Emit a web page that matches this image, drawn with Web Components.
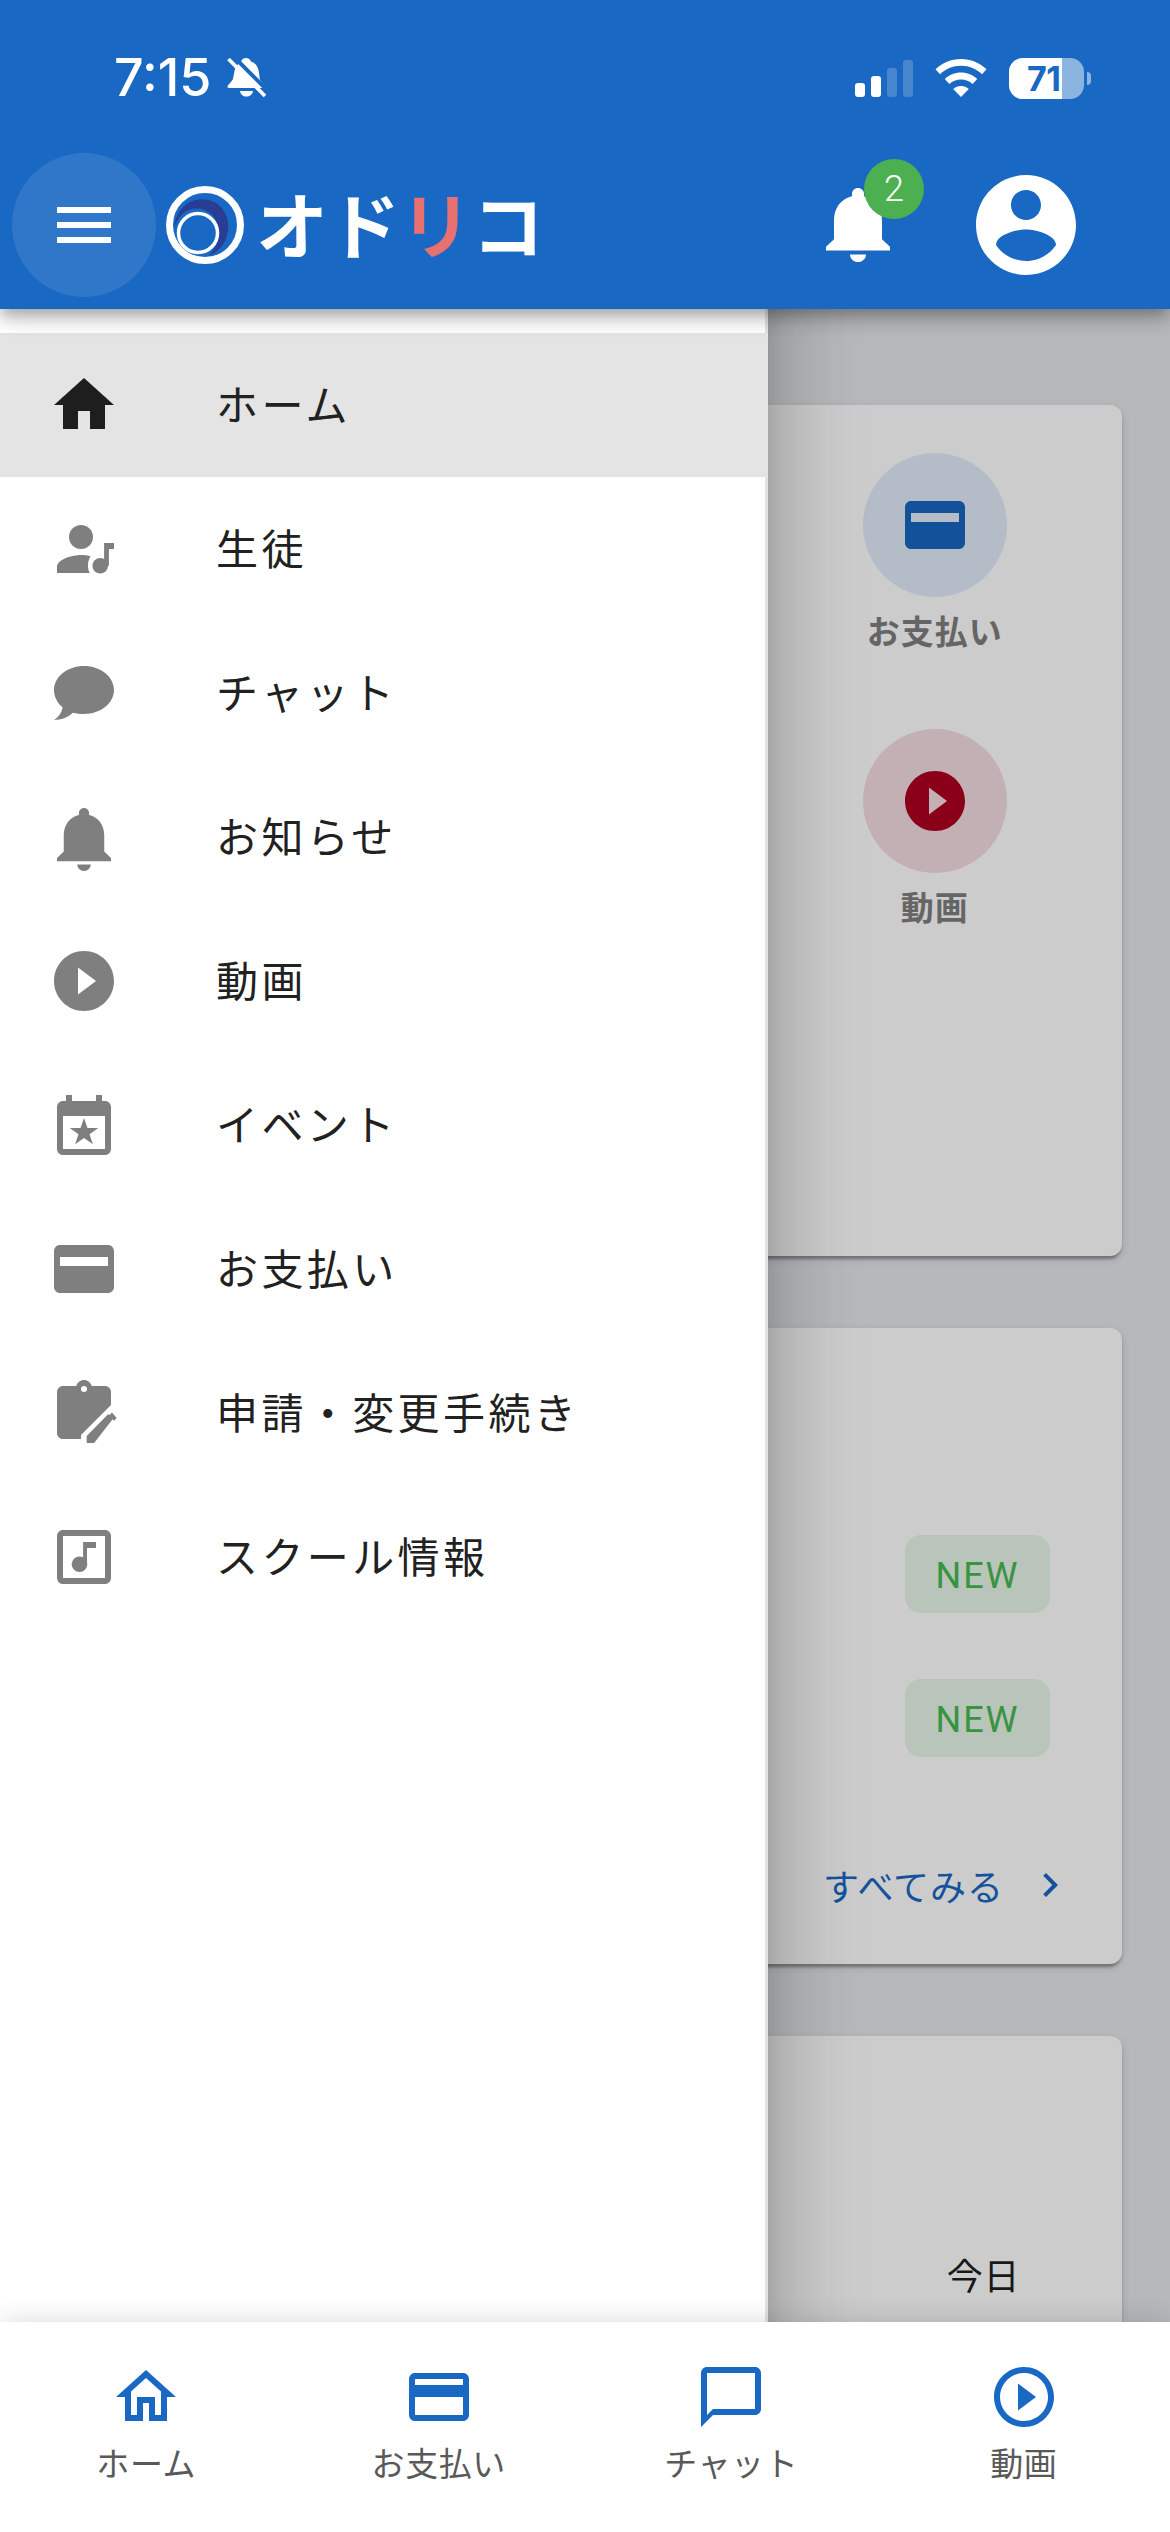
<!DOCTYPE html>
<html lang="ja">
<head>
<meta charset="utf-8">
<title>オドリコ</title>
<style>
  html, body { margin: 0; padding: 0; }
  body { font-family: "Noto Sans CJK JP", "Noto Sans", sans-serif; }
</style>
</head>
<body>
<app-shell>
  <status-bar slot="top"></status-bar>
  <app-header slot="top"></app-header>

  <home-card slot="page">
    <action-tile label="お支払い" icon="card" tone="blue"></action-tile>
    <action-tile label="動画" icon="play" tone="red"></action-tile>
  </home-card>
  <news-card slot="page"></news-card>
  <today-card slot="page"></today-card>

  <side-drawer slot="drawer">
    <drawer-item icon="home" active>ホーム</drawer-item>
    <drawer-item icon="student">生徒</drawer-item>
    <drawer-item icon="bubble">チャット</drawer-item>
    <drawer-item icon="bell">お知らせ</drawer-item>
    <drawer-item icon="play">動画</drawer-item>
    <drawer-item icon="event">イベント</drawer-item>
    <drawer-item icon="card">お支払い</drawer-item>
    <drawer-item icon="clipboard">申請・変更手続き</drawer-item>
    <drawer-item icon="music">スクール情報</drawer-item>
  </side-drawer>

  <bottom-nav slot="bottom">
    <nav-tab icon="homeOutline">ホーム</nav-tab>
    <nav-tab icon="cardOutline">お支払い</nav-tab>
    <nav-tab icon="chatOutline">チャット</nav-tab>
    <nav-tab icon="playOutline">動画</nav-tab>
  </bottom-nav>
</app-shell>

<script>
(function() {
    const PRIMARY = '#1968c3';
    const BELL = 'M12 22c1.1 0 2-.9 2-2h-4c0 1.1.89 2 2 2zm6-6v-5c0-3.07-1.64-5.64-4.5-6.32V4c0-.83-.67-1.5-1.5-1.5s-1.5.67-1.5 1.5v.68C7.63 5.36 6 7.92 6 11v5l-2 2v1h16v-1l-2-2z';

    // 24x24 icon shapes, most of them material icons
    const ICONS = {
        menu: '<path d="M3 18h18v-2H3v2zm0-5h18v-2H3v2zm0-7v2h18V6H3z"/>',
        home: '<path d="M10 20v-6h4v6h5v-8h3L12 3 2 12h3v8z"/>',
        student: `<circle cx="11" cy="8" r="4"/>
            <path d="M3 20v-2c0-2.6 5.2-4 8-4 1.1 0 2.2.2 3.2.4-.6.9-.9 2-.9 3.1 0 .9.2 1.7.6 2.5z"/>
            <circle cx="17.4" cy="17.6" r="2.6"/><path d="M18.7 10H22v2h-1.7v5.6h-1.6z"/>`,
        bubble: '<path d="M12 3C6.5 3 2 6.6 2 11c0 2.3 1.1 4.3 2.9 5.8-.4 1.9-1.5 3.3-2.9 4.2 2.3 0 4.5-.8 6.3-2.4 1.2.3 2.4.4 3.7.4 5.5 0 10-3.6 10-8s-4.5-8-10-8z"/>',
        bell: `<path transform="matrix(1.125 0 0 1.077 -1.5 -.36)" d="${BELL}"/>`,
        play: '<path d="M12 2C6.48 2 2 6.48 2 12s4.48 10 10 10 10-4.48 10-10S17.52 2 12 2zm-2 14.5v-9l6 4.5-6 4.5z"/>',
        event: `<path fill-rule="evenodd" d="M6 2h2v2h8V2h2v2h1c1.1 0 2 .9 2 2v14c0 1.1-.9 2-2 2H5c-1.1 0-2-.9-2-2V6c0-1.1.9-2 2-2h1zM5 9v11h14V9z"/>
            <path d="M12 9.7l1.15 3.3h3.6l-2.9 2.1 1.1 3.3-2.95-2.1-2.95 2.1 1.1-3.3-2.9-2.1h3.6z"/>`,
        card: '<path fill-rule="evenodd" d="M20 4H4c-1.1 0-2 .9-2 2v12c0 1.1.9 2 2 2h16c1.1 0 2-.9 2-2V6c0-1.1-.9-2-2-2zm0 7H4V8h16v3z"/>',
        clipboard: `<path fill-rule="evenodd" d="M12 1c1.2 0 2.2.8 2.6 2H19c1.1 0 2 .9 2 2v4.3l-10 10v1.4H5c-1.1 0-2-.9-2-2V5c0-1.1.9-2 2-2h4.4c.4-1.2 1.4-2 2.6-2zm0 2a1 1 0 100 2 1 1 0 000-2z"/>
            <path d="M12.9 22v-2.3l7.2-7.4 1.5 1.7-6.2 8zM21.3 11.8l1.6 1.9-.9.9-1.6-1.8z"/>`,
        music: `<path fill-rule="evenodd" d="M5 3h14c1.1 0 2 .9 2 2v14c0 1.1-.9 2-2 2H5c-1.1 0-2-.9-2-2V5c0-1.1.9-2 2-2zm0 2v14h14V5z"/>
            <circle cx="10.5" cy="14.4" r="2.6"/><path d="M11.7 7H16v2h-3v5.4h-1.3z"/>`,
        chevron: '<path d="M10 6L8.59 7.41 13.17 12l-4.58 4.59L10 18l6-6z"/>',
        account: '<path d="M12 2C6.48 2 2 6.48 2 12s4.48 10 10 10 10-4.48 10-10S17.52 2 12 2zm0 3c1.66 0 3 1.34 3 3s-1.34 3-3 3-3-1.34-3-3 1.34-3 3-3zm0 14.2c-2.5 0-4.71-1.28-6-3.22.03-1.99 4-3.08 6-3.08 1.99 0 5.97 1.09 6 3.08-1.29 1.94-3.5 3.22-6 3.22z"/>',
        homeOutline: '<path d="M12 5.69l5 4.5V18h-2v-6H9v6H7v-7.81l5-4.5M12 3L2 12h3v8h6v-6h2v6h6v-8h3L12 3z"/>',
        cardOutline: '<path d="M20 4H4c-1.11 0-1.99.89-1.99 2L2 18c0 1.11.89 2 2 2h16c1.11 0 2-.89 2-2V6c0-1.11-.89-2-2-2zm0 14H4v-6h16v6zm0-10H4V6h16v2z"/>',
        chatOutline: '<path d="M20 2H4c-1.1 0-2 .9-2 2v18l4-4h14c1.1 0 2-.9 2-2V4c0-1.1-.9-2-2-2zm0 14H6l-2 2V4h16v12z"/>',
        playOutline: '<path d="M12 2C6.48 2 2 6.48 2 12s4.48 10 10 10 10-4.48 10-10S17.52 2 12 2zm0 18c-4.41 0-8-3.59-8-8s3.59-8 8-8 8 3.59 8 8-3.59 8-8 8zm-2-3.5l6-4.5-6-4.5v9z"/>'
    };

    // small helper so every element below stays a few lines
    function define(name, html) {
        const $template = document.createElement('template');
        $template.innerHTML = html;
        customElements.define(name, class extends HTMLElement {
            constructor() {
                super();
                this.attachShadow({ mode: 'open' });
                this.shadowRoot.appendChild($template.content.cloneNode(true));
            }
            connectedCallback() {
                // pass the icon attribute down to the inner app-icon
                const $icon = this.shadowRoot.querySelector('app-icon[data-from-host]');
                if ($icon) $icon.setAttribute('name', this.getAttribute('icon'));
                const $label = this.shadowRoot.querySelector('[data-label]');
                if ($label) $label.textContent = this.getAttribute('label');
            }
        });
    }

    class AppIcon extends HTMLElement {
        static get observedAttributes() { return ['name']; }
        constructor() {
            super();
            this.attachShadow({ mode: 'open' });
            this.shadowRoot.innerHTML = `
            <style>
                :host { display: block; width: var(--size, 72px); height: var(--size, 72px); flex: none; }
                svg { display: block; width: 100%; height: 100%; fill: currentColor; }
            </style>
            <svg viewBox="0 0 24 24"></svg>`;
        }
        attributeChangedCallback(attr, old, value) {
            this.shadowRoot.querySelector('svg').innerHTML = ICONS[value] || '';
        }
    }
    customElements.define('app-icon', AppIcon);

    define('app-shell', `
    <style>
        :host {
            display: block;
            position: relative;
            width: 1170px;
            height: 2532px;
            overflow: hidden;
            background: #e4e6ea;
        }
        .top { position: absolute; z-index: 4; top: 0; left: 0; right: 0;
            background: ${PRIMARY};
            box-shadow: 0 6px 12px -3px rgba(0,0,0,.2), 0 12px 15px 0 rgba(0,0,0,.14), 0 3px 30px 0 rgba(0,0,0,.12);
        }
        .page { display: flex; flex-direction: column; gap: 72px; padding: 405px 48px 0; }
        .scrim { position: absolute; z-index: 1; inset: 0; background: rgba(0,0,0,.2); }
        .drawer { position: absolute; z-index: 2; top: 0; left: 0; bottom: 0; }
        .bottom { position: absolute; z-index: 3; left: 0; right: 0; bottom: 0; }
    </style>
    <div class="page"><slot name="page"></slot></div>
    <div class="scrim"></div>
    <div class="drawer"><slot name="drawer"></slot></div>
    <div class="top"><slot name="top"></slot></div>
    <div class="bottom"><slot name="bottom"></slot></div>`);

    define('status-bar', `
    <style>
        :host { display: flex; align-items: center; height: 153px; box-sizing: border-box; padding: 3px 79px 0 114px; color: #fff; }
        .time { font: 500 52px/1 Inter, "Liberation Sans", sans-serif; }
        .mute { width: 40px; height: 42px; margin-left: 16px; }
        .right { margin-left: auto; display: flex; align-items: center; }
        .signal { display: flex; align-items: flex-end; gap: 6px; height: 37px; }
        .signal i { display: block; width: 10px; border-radius: 3px; background: #fff; }
        .signal i.off { background: rgba(255,255,255,.2); }
        .wifi { width: 52px; height: 38px; margin-left: 22px; }
        .battery { position: relative; display: flex; margin-left: 22px; width: 75px; height: 41px; border-radius: 14px; overflow: hidden; background: rgba(255,255,255,.5); }
        .battery b { display: block; width: 53px; height: 100%; background: #fff; }
        .battery span { position: absolute; left: 18px; top: 0; font: 700 34px/41px Inter, "Liberation Sans", sans-serif; color: ${PRIMARY}; letter-spacing: -.5px; }
        .nub { width: 4px; height: 13px; margin-left: 3px; border-radius: 0 4px 4px 0; background: rgba(255,255,255,.5); }
    </style>
    <span class="time">7:15</span>
    <svg class="mute" viewBox="12 12 40 42" fill="#fff">
        <path d="M31 13c2.5 0 4.3 1.5 4.8 3.5C41 18 43.5 22.5 44 28l.8 6c.3 2.5 4.5 5 5.2 7.5.2 1-.5 1.500-1.500 1.500H14c-1 0-1.700-.5-1.500-1.500.7-2.500 4.200-4.500 5.500-7.500l1.500-8C20.500 21 24 18 26.200 16.500 26.700 14.500 28.500 13 31 13zM25 46h13c-.5 3.500-3 5.500-6.500 5.500S25.500 49.500 25 46z"/>
        <path d="M17 10l37 37" stroke="${PRIMARY}" stroke-width="4"/>
        <path d="M13.5 14l36.500 37" stroke="#fff" stroke-width="3.6"/>
    </svg>
    <div class="right">
        <div class="signal"><i style="height:14px"></i><i style="height:21px"></i><i class="off" style="height:29px"></i><i class="off" style="height:37px"></i></div>
        <svg class="wifi" viewBox="0 0 52 38" fill="#fff">
            <path d="M26 0c10 0 18.8 3.9 25.5 10.2l-4.5 5C41.5 10 34.2 6.8 26 6.8S10.5 10 5 15.200l-4.500-5C7.200 3.900 16 0 26 0z"/>
            <path d="M26 13.500c6.200 0 11.800 2.400 16.200 6.400l-4.600 5C34.600 22.200 30.500 20.500 26 20.500s-8.600 1.700-11.600 4.400l-4.600-5c4.400-4 10-6.400 16.200-6.400z"/>
            <path d="M26 27c3 0 5.700 1.100 7.800 3L26 38l-7.800-8c2.100-1.900 4.800-3 7.800-3z"/>
        </svg>
        <div class="battery"><b></b><span>71</span></div>
        <div class="nub"></div>
    </div>`);

    define('app-header', `
    <style>
        :host { display: flex; align-items: center; height: 156px; position: relative; color: #fff; }
        .menu { width: 144px; height: 144px; margin: -12px 0 0 12px; border-radius: 50%; background: rgba(255,255,255,.1); display: flex; align-items: center; justify-content: center; }
        .logo { display: flex; align-items: center; margin: -12px 0 0 10px; }
        .mark { width: 78px; height: 78px; display: block; }
        .name { margin: -6px 0 0 12px; font: 700 72px/78px "Noto Sans CJK JP", sans-serif; white-space: nowrap; }
        .name em { font-style: normal; color: #e97070; }
        .actions { margin: -12px 84px 0 auto; display: flex; align-items: center; }
        .bell { position: relative; width: 64px; height: 74px; }
        .bell svg { display: block; width: 64px; height: 74px; fill: #fff; }
        .badge { position: absolute; left: 38px; top: -29px; width: 60px; height: 60px; border-radius: 50%; background: #4caf50; font: 300 36px/60px Roboto, sans-serif; text-align: center; }
        .account { --size: 120px; margin-left: 76px; }
    </style>
    <div class="menu"><app-icon name="menu"></app-icon></div>
    <div class="logo">
        <svg class="mark" viewBox="0 0 78 78">
            <circle cx="39" cy="39" r="35.5" fill="none" stroke="#fff" stroke-width="7"/>
            <path d="M8.3 41C10 24 22 13.3 36 13.3 52 13.3 62.3 26 62.3 40 62.3 54 54 66 43 69.5 50 62 54 54 53 45 52 32 43 23 32 22.500 20 22 12 30 8.300 41z" fill="#2a3d94"/>
            <circle cx="32" cy="47" r="19.5" fill="${PRIMARY}" stroke="#fff" stroke-width="3.5"/>
        </svg>
        <span class="name">オド<em>リ</em>コ</span>
    </div>
    <div class="actions">
        <div class="bell">
            <svg viewBox="4 2.5 16 19.5" preserveAspectRatio="none"><path d="${BELL}"/></svg>
            <div class="badge">2</div>
        </div>
        <app-icon class="account" name="account"></app-icon>
    </div>`);

    define('side-drawer', `
    <style>
        :host {
            display: flex;
            flex-direction: column;
            box-sizing: border-box;
            width: 768px;
            height: 2532px;
            padding-top: 333px;
            background: #fff;
            border-right: 3px solid #e2e2e2;
            box-shadow: 0 24px 30px -15px rgba(0,0,0,.2), 0 48px 72px 6px rgba(0,0,0,.14), 0 18px 90px 15px rgba(0,0,0,.12);
        }
    </style>
    <slot></slot>`);

    define('drawer-item', `
    <style>
        :host { display: flex; align-items: center; height: 144px; padding-left: 48px; color: #7f7f7f; }
        :host([active]) { background: #e4e4e4; color: #1e1e1e; margin-right: -3px; }
        span { margin-left: 96px; padding-bottom: 6px; font-size: 42px; letter-spacing: 3.4px; color: #212121; white-space: nowrap; }
    </style>
    <app-icon data-from-host></app-icon>
    <span><slot></slot></span>`);

    const CARD_BOX = `
        box-sizing: border-box;
        border-radius: 12px;
        background: #fff;
        box-shadow: 0 6px 3px -3px rgba(0,0,0,.2), 0 3px 3px 0 rgba(0,0,0,.14), 0 3px 9px 0 rgba(0,0,0,.12);`;

    define('home-card', `
    <style>
        :host {
            display: grid;
            grid-template-columns: repeat(3, 1fr);
            align-content: start;
            height: 851px;
            padding: 48px 10px 0 0;
            ${CARD_BOX}
        }
        ::slotted(*) { grid-column: 3; }
    </style>
    <slot></slot>`);

    define('action-tile', `
    <style>
        :host { display: flex; flex-direction: column; align-items: center; height: 276px; font-weight: 700; }
        .disc { width: 144px; height: 144px; border-radius: 50%; display: flex; align-items: center; justify-content: center; }
        :host([tone=blue]) .disc { background: #e2ecf9; color: #1867c0; }
        :host([tone=red]) .disc { background: #f4dde2; color: #ae001e; }
        .label { margin-top: 9px; font-size: 33px; line-height: 48px; color: #7f7f7f; letter-spacing: 1px; white-space: nowrap; }
    </style>
    <div class="disc"><app-icon data-from-host></app-icon></div>
    <div class="label" data-label></div>`);

    define('news-card', `
    <style>
        :host {
            display: flex;
            flex-direction: column;
            height: 636px;
            padding: 174px 72px 0 0;
            ${CARD_BOX}
        }
        .row { height: 144px; display: flex; align-items: center; justify-content: flex-end; }
        .chip { width: 145px; height: 78px; box-sizing: border-box; padding-top: 3px; display: flex; align-items: center; justify-content: center; border-radius: 16px; background: #e8f5e9; color: #48b950; font: 400 36px/1 Roboto, sans-serif; letter-spacing: 2px; }
        .more { margin: 71px -24px 0 0; height: 48px; display: flex; align-items: center; justify-content: flex-end; color: ${PRIMARY}; font-size: 36px; letter-spacing: 1px; gap: 22px; }
        app-icon { --size: 48px; }
    </style>
    <div class="row"><span class="chip">NEW</span></div>
    <div class="row"><span class="chip">NEW</span></div>
    <div class="more"><span>すべてみる</span><app-icon name="chevron"></app-icon></div>`);

    define('today-card', `
    <style>
        :host {
            display: flex;
            justify-content: flex-end;
            height: 440px;
            padding: 214px 102px 0 0;
            color: #1f1f1f;
            font-size: 36px;
            letter-spacing: .6px;
            line-height: 48px;
            ${CARD_BOX}
        }
    </style>
    <span>今日</span>`);

    define('bottom-nav', `
    <style>
        :host {
            display: grid;
            grid-template-columns: repeat(4, 1fr);
            height: 210px;
            background: #fff;
            box-shadow: 0 -3px 24px rgba(0,0,0,.12);
        }
    </style>
    <slot></slot>`);

    define('nav-tab', `
    <style>
        :host { display: flex; flex-direction: column; align-items: center; padding-top: 39px; color: ${PRIMARY}; }
        span { margin-top: 6px; font-size: 33px; line-height: 46px; letter-spacing: .6px; color: #595959; white-space: nowrap; }
    </style>
    <app-icon data-from-host></app-icon>
    <span><slot></slot></span>`);
})();
</script>
</body>
</html>
